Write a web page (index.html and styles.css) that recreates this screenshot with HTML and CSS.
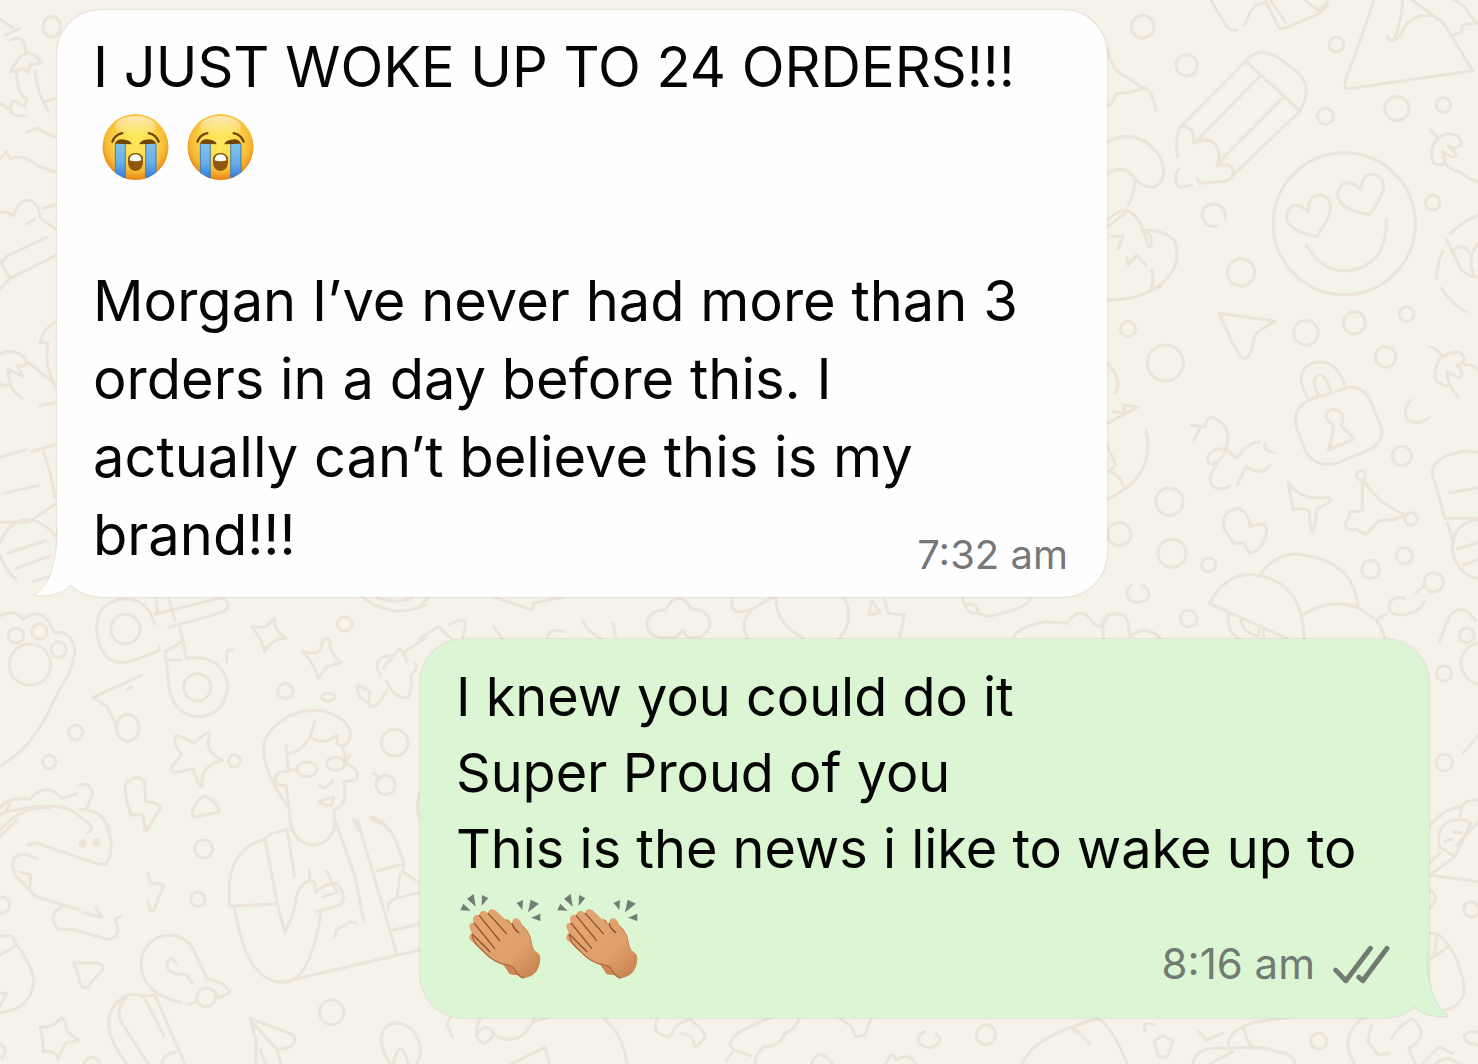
FILE: index.html
```html
<!DOCTYPE html>
<html lang="en">
<head>
<meta charset="utf-8">
<meta name="viewport" content="width=device-width, initial-scale=1">
<title>Chat with Morgan</title>
<link rel="stylesheet" href="styles.css">
</head>
<body>
<svg class="wallpaper" viewBox="0 0 1478 1064" preserveAspectRatio="xMinYMin slice" aria-hidden="true">
  <!-- pencil, smiley, slice and loose rings: top right -->
  <g transform="translate(1100 0) scale(.33333)">
    <circle cx="128" cy="80" r="34"/><circle cx="260" cy="196" r="32"/><circle cx="709" cy="134" r="22"/><circle cx="676" cy="349" r="24"/><circle cx="891" cy="326" r="36"/><circle cx="1030" cy="315" r="22"/><circle cx="423" cy="817" r="41"/><circle cx="998" cy="608" r="22"/><circle cx="733" cy="671" r="213"/>
    <path d="M333 0Q360 50 380 78Q392 94 412 90M434 76Q450 28 470 15L498 5L536 82Q546 90 560 83L655 42Q680 28 682 0M512 0L556 66M615 0Q650 30 660 32Q668 20 682 10"/>
    <path d="M822 0Q775 140 740 230Q728 268 745 266L1118 212Q1080 150 1055 108Q1020 50 1012 58Q990 35 935 0M908 0Q905 70 880 122Q868 128 862 108M880 122Q900 115 915 80Q935 45 992 46M1060 0Q1095 12 1110 45L1130 70L1088 75L1085 95L1055 108"/>
    <path d="M437 183Q480 135 540 176L595 220Q640 260 600 333ZM437 183L243 378M478 230L283 430M549 294L358 486M600 333L400 525M243 378Q225 405 232 470M243 378Q290 380 280 430Q330 405 350 440Q365 470 350 498Q395 480 401 520Q390 545 370 544L300 550L292 536M238 505Q215 535 238 563L275 555"/>
    <path d="M650 710Q555 690 560 645Q575 590 624 635Q625 580 665 586Q725 605 650 710ZM808 643Q715 630 712 580Q730 525 782 567Q788 515 825 524Q885 545 808 643ZM620 737Q665 815 740 813Q860 800 860 657"/>
    <path d="M375 657Q383 620 343 611Q305 615 306 648Q315 685 350 679M23 145Q35 215 70 225L130 265Q155 260 168 333M23 318Q40 310 50 280Q90 280 130 265M23 425Q120 380 180 470Q210 540 160 562Q125 560 105 535Q75 490 23 520M105 535Q105 580 85 615M23 660Q90 590 130 690Q145 750 150 740Q165 700 125 690Q200 690 225 725Q250 800 180 855Q120 900 23 900M23 680L75 640M35 710L70 708L55 745M80 770L85 795L110 765L138 795M155 810Q165 850 150 870L180 860"/>
    <path d="M992 390L1015 415M1000 490Q985 440 1015 415Q1040 390 1075 410Q1095 435 1065 445L1045 438L1070 465Q1060 480 1028 455L1035 490Q1020 498 1000 490M1035 490Q1060 515 1080 517Q1110 540 1134 545M1050 700L1095 665L1134 645M1040 720L1085 810Q1110 835 1134 830M1060 750Q1090 725 1110 760M1134 730Q1100 770 1120 820M1028 755Q1010 790 1010 835M1025 865Q1060 920 1100 935"/>
  </g>
  <!-- padlock, paper dart and sparks: right edge -->
  <g transform="translate(1100 290) scale(.33333)">
    <circle cx="84" cy="117" r="23"/><circle cx="196" cy="219" r="54"/><circle cx="618" cy="128" r="37"/><circle cx="763" cy="98" r="33"/><circle cx="920" cy="72" r="22"/><circle cx="857" cy="201" r="31"/><circle cx="906" cy="498" r="29"/><circle cx="208" cy="635" r="41"/><circle cx="58" cy="732" r="35"/><circle cx="216" cy="790" r="42"/><circle cx="326" cy="825" r="21"/><circle cx="913" cy="797" r="24"/><circle cx="812" cy="838" r="27"/><circle cx="1001" cy="877" r="29"/><circle cx="933" cy="687" r="19"/><circle cx="783" cy="556" r="14"/>
    <path d="M357 70L524 93L470 128Q460 145 455 180Q440 215 425 203L400 165Z"/>
    <path d="M625 328Q580 250 630 222Q710 195 735 290M655 315Q630 270 655 255Q675 250 692 303M640 325L745 292Q790 290 810 330L840 400Q860 450 810 478L710 520Q645 535 615 480L590 415Q575 355 625 332ZM700 405Q670 385 680 370Q700 345 724 370Q735 390 722 405L762 447L685 480Q700 440 700 405"/>
    <path d="M273 405L315 410Q320 380 340 382Q400 410 378 475Q360 525 330 522Q310 500 345 480L378 475L408 505L425 485Q450 455 478 455M280 455L300 415M350 520Q310 580 350 595Q375 600 390 588M412 585L438 530Q490 560 508 525M495 460Q490 485 524 488"/>
    <path d="M565 577Q595 620 640 623L685 623Q710 630 650 657Q650 690 640 725Q630 730 628 665Q615 650 580 660Q570 620 565 577ZM787 572V662L750 666Q745 690 735 700Q735 725 770 718L798 733L838 692L885 688L912 676L845 635Q800 590 790 570M450 710Q450 670 415 655Q360 665 372 715L400 760L430 758L448 790Q480 785 495 745Q510 700 480 702Z"/>
    <path d="M988 172Q1010 170 1025 198M1045 288Q985 280 1015 215Q1040 180 1080 188Q1110 215 1070 225Q1100 255 1075 263L1042 245Q1040 290 1075 320M1095 225Q1120 220 1134 240M932 330Q900 375 930 393Q960 405 988 382M1134 487L1095 483Q990 500 998 555L1035 685H1134M1050 608L1134 594M1042 700L1058 750M1134 690Q1050 700 1058 790Q1080 860 1134 865M1072 777L1134 757M1090 825L1134 808M23 220Q70 270 45 310M23 400L115 350L70 345L75 370L40 365M138 418Q170 560 23 627M23 470L48 525L25 545Q60 550 70 590"/>
  </g>
  <!-- cap and small loops above the reply -->
  <g transform="translate(1100 540) scale(.33333)">
    <circle cx="266" cy="236" r="25"/><circle cx="1100" cy="286" r="22"/>
    <path d="M328 190Q375 100 460 104Q610 120 612 295M328 190L560 295M480 102Q530 40 590 42Q760 60 773 195M612 222Q730 155 820 235M385 225Q380 270 412 295M422 240Q430 280 475 288L478 268M490 270V295M855 295Q845 260 828 240L860 222M948 158L975 137M912 175Q890 165 870 185Q855 230 915 224Q960 215 973 185M1018 305L1050 225Q1080 195 1110 222L1125 240M95 135Q70 155 90 180Q110 195 140 180Q160 155 125 135M10 295L8 245Q35 205 75 230Q90 250 88 290Q140 250 180 295"/>
  </g>
  <!-- gap between the two messages -->
  <g transform="translate(420 590) scale(.44643 .33333)">
    <path d="M168 22L250 60L255 40L320 22M550 60Q560 30 580 25Q600 30 605 55L630 62Q670 100 630 140L600 143L588 120L575 140Q510 155 508 100Q515 60 550 60M700 22Q690 80 740 60L790 22M740 65Q715 100 735 145M798 22Q795 100 860 145M950 22Q975 90 940 145M1010 35L1005 75L1030 68L1015 35M1040 30L1050 70L1085 75L1075 140M1215 22Q1225 80 1250 70Q1250 35 1220 45M1250 70L1270 80Q1360 60 1368 22M1330 140Q1340 110 1400 95L1450 100Q1480 40 1505 95Q1530 130 1540 75L1568 70M285 145Q290 110 322 125M365 92Q370 120 405 145M432 98L438 140M0 145L40 110L70 145M65 105Q110 70 100 120L95 145M0 50L18 22M165 110L185 145"/>
  </g>
  <!-- paw, headphones, stars and portrait: left -->
  <g transform="translate(0 590) scale(.33333)">
    <circle cx="48" cy="137" r="23"/><circle cx="119" cy="125" r="23"/><circle cx="176" cy="179" r="23"/><circle cx="90" cy="224" r="62"/><circle cx="376" cy="117" r="44"/><circle cx="592" cy="292" r="41"/><circle cx="1034" cy="102" r="22"/><circle cx="856" cy="303" r="23"/><circle cx="703" cy="513" r="18"/><circle cx="227" cy="427" r="22"/><circle cx="148" cy="516" r="20"/><circle cx="1184" cy="458" r="40"/><circle cx="1157" cy="585" r="29"/><ellipse cx="383" cy="413" rx="34" ry="40"/><ellipse cx="921" cy="538" rx="30" ry="22"/><ellipse cx="1007" cy="521" rx="28" ry="20"/><ellipse cx="985" cy="321" rx="20" ry="12"/>
    <path d="M0 78Q40 55 70 88Q130 40 162 128Q215 120 225 180Q220 230 190 280M183 290L155 345Q100 470 5 524"/>
    <path d="M465 102Q440 25 375 26Q285 35 290 125Q305 240 400 212L478 182V168M465 72L670 22Q700 50 665 68L505 112M468 22L472 65M505 22L525 90M538 105L560 205Q670 190 684 290Q670 380 590 380Q510 370 505 270L495 185L545 155M500 210H545M426 255L280 322L320 350L350 405M380 300L395 290M680 215V182L697 180"/>
    <path d="M755 110L795 112L825 85Q820 120 857 145Q815 145 793 187Q790 150 755 110ZM908 185Q950 195 960 180Q975 125 990 155Q985 185 1024 218L980 230L955 265Q945 225 908 185ZM525 440Q530 430 582 460Q635 410 628 440Q615 490 668 510Q600 530 607 585Q600 600 578 535Q500 560 515 530L545 495Q520 460 525 440ZM392 675Q365 590 382 575Q415 550 434 575L437 635Q500 640 475 665L440 720M392 675H430L434 720M578 682Q570 650 612 616Q650 635 660 665Z"/>
    <path d="M862 648Q760 500 805 430Q870 350 970 363Q1060 390 1050 445Q1040 475 1010 462L1012 435Q970 470 930 440L945 393M930 440Q900 490 865 490M858 465L865 545Q815 540 830 580Q840 590 858 585L875 720M865 540L890 540M1025 465L1040 520Q1085 540 1068 570L1030 575Q1050 640 1002 660L1005 720M1035 520L1050 495M958 585Q975 605 998 572M955 635L1002 620L995 645Q975 650 955 635"/>
    <path d="M0 655Q20 620 90 628Q135 570 185 625L228 612M232 588Q270 570 278 610L260 655M0 672Q180 620 240 680Q280 710 275 720M20 660Q30 640 28 640M240 657Q310 660 328 720M0 720Q60 650 150 653M1140 255Q1120 215 1150 200L1185 195L1195 178Q1215 180 1220 215M1185 195L1150 232M1215 185L1275 145M1160 275Q1185 330 1225 322Q1240 290 1232 255Q1260 230 1245 220M1160 300Q1125 370 1105 340L1110 305L1075 285Q1065 320 1105 340M1120 550L1140 565M1088 22Q1180 90 1275 45M1130 22Q1190 45 1240 22M1060 688L1075 720M1112 682Q1150 690 1165 720M1258 610Q1245 660 1258 680"/>
  </g>
  <g transform="translate(0 820) scale(.33333)">
    <circle cx="611" cy="87" r="27"/><circle cx="593" cy="238" r="22"/><circle cx="995" cy="577" r="37"/><circle cx="618" cy="532" r="28"/><circle cx="4" cy="255" r="25"/><circle class="dot" cx="248" cy="70" r="8"/><circle class="dot" cx="290" cy="68" r="8"/>
    <path d="M0 50L50 0M255 0Q290 25 262 38M312 0Q350 80 320 130Q305 135 290 130L105 68L85 75M108 115Q70 95 45 110Q30 140 50 170L105 228L238 270M55 155L92 165L90 200M250 278L305 292L288 265M185 260Q140 285 172 325Q190 330 215 328L325 358Q365 350 350 310L345 297L362 290"/>
    <path d="M430 0L440 33L460 0M445 158L450 188Q480 190 491 195L462 270Q450 285 445 245M220 428L290 428Q325 440 298 460L275 485Q260 520 240 490Q235 455 220 428ZM120 620Q160 625 180 595Q195 590 200 630L235 662L195 670L175 715Q165 690 130 695Q130 660 120 620Z"/>
    <path d="M545 548Q410 520 425 410Q450 345 510 345Q570 350 590 410L620 475L665 490Q700 520 685 520L655 535L640 510M565 553L595 545M528 430Q515 405 502 425Q495 465 555 462L578 488M380 732Q280 600 365 535Q395 515 430 528L465 525L555 732M430 528L492 648M445 732L360 600Q350 560 380 530M485 732Q490 700 528 697"/>
    <path d="M870 0Q880 70 940 76Q1000 70 1005 0M815 40L795 57Q670 90 690 258L832 252L795 57M830 37L862 28L883 168M832 252L855 338Q890 260 887 240Q895 190 930 182L928 150M703 262Q740 490 850 486Q930 490 962 280M850 486L1258 390M930 182Q950 180 948 218Q970 190 1010 190Q1045 230 1020 255L950 275M980 153L1010 218L970 230M1005 0L1065 170L1092 305M1072 0L1190 400M1115 0Q1170 10 1190 70L1212 130L1130 153M1212 130L1208 155L1258 187M1200 165L1190 235L1258 217M1190 235Q1155 250 1165 270M1180 330L1258 312M1005 350L1010 330L1050 305L1068 308"/>
    <path d="M0 578Q90 570 102 485Q95 430 50 375L35 347H0M0 405L50 375M0 520L20 520L0 558M768 732V660L750 595L880 645Q900 685 830 688L843 732M755 605L830 688M780 690L798 732M1170 732Q1120 650 1165 615Q1210 595 1245 640Q1275 690 1250 732M1180 732Q1200 640 1225 732M250 732Q275 690 303 732M0 670Q30 690 5 715"/>
  </g>
  <!-- flower, vine and slats: far left -->
  <g transform="scale(.33333 .38265)">
    <circle cx="155" cy="70" r="27"/>
    <path d="M0 50L38 72M15 92L58 75M30 105Q75 85 78 138M78 138Q50 150 32 188L70 180L85 188L92 168L125 165Q110 140 78 138M50 190Q50 240 80 260L75 278L40 262Q20 290 45 302L80 303M105 185Q110 240 145 292M135 265L165 257M0 270L35 290M82 345L115 335L130 345L165 358M0 415L20 395L30 415Q70 400 110 432L165 450M0 555Q20 550 40 565Q55 515 95 525Q120 540 120 570L165 598M80 585L105 573M0 692L20 670L140 620M0 755L30 728L165 668M0 680L30 728M130 545L165 535M165 842Q130 860 120 895L145 898Q130 950 165 1010M0 925Q50 905 82 945L160 1000M82 945Q80 960 50 955L70 985L25 965Q25 1020 65 1040M0 1000Q10 1015 25 1005M120 1060L165 1052M0 1195L78 1175M95 1180L165 1162M130 1180Q155 1240 165 1300M15 1288L115 1268M0 1365H85L165 1318M0 1420Q30 1350 100 1360Q140 1370 165 1400M0 1450Q20 1500 48 1512M25 1445L138 1412M48 1486L152 1452M100 1520L165 1502"/>
  </g>
  <!-- strip below and beside the reply -->
  <g transform="translate(420 1005) scale(.67474 .33333)">
    <ellipse cx="839" cy="89" rx="14" ry="30"/><ellipse cx="1332" cy="108" rx="12" ry="24"/>
    <path d="M45 37L40 60L48 95M90 37Q75 100 95 115Q115 95 105 72Q90 60 85 90M110 88Q135 120 155 85L168 50L190 37M168 50V37M270 37Q300 80 307 177M135 177L185 127L192 177M352 37Q340 90 370 95L380 60L400 42Q430 90 420 105L408 125L402 95L388 85M520 37L478 75Q450 110 465 135L490 152M455 165L465 135M562 37Q560 70 540 85Q535 125 510 125Q495 150 497 177M620 37L640 65L645 95L660 90L668 40M580 177Q590 120 612 177M690 177Q700 130 705 165Q725 140 735 177M748 80Q735 90 740 115Q755 140 768 115Q775 100 765 88M892 177Q910 90 1005 42Q1025 60 1048 177M970 70L992 115M1005 42Q960 60 970 80M1075 80Q1070 45 1088 60M1100 92L1116 108L1108 155L1095 155L1088 110ZM1145 177Q1150 120 1200 130Q1190 80 1240 50L1290 37M1200 130Q1250 120 1270 140Q1295 145 1297 177M1170 177L1205 140M1220 65Q1225 110 1235 130M1155 80L1165 105L1190 85M1400 37Q1360 90 1385 177M1410 60L1405 110L1420 150L1435 145M1440 100L1450 70L1470 40Q1500 90 1465 130L1475 177M1485 177L1510 125L1530 145M1568 80Q1535 80 1555 115L1568 120M1505 177Q1520 145 1540 177"/>
  </g>
  <g transform="translate(1400 600) scale(.33333)">
    <circle cx="132" cy="220" r="23"/><circle cx="133" cy="488" r="25"/><circle cx="214" cy="928" r="23"/><circle cx="245" cy="190" r="62"/>
    <path d="M190 458L234 408M87 680Q130 625 185 620Q195 600 234 600M185 620L178 655M118 740Q105 670 165 660Q205 655 212 670L165 770L118 740M234 665L170 735M87 790L120 760M97 820L165 770M87 825L234 845M135 725L155 718M160 695L185 700M87 870Q125 890 87 925M87 1000Q130 990 170 1080Q205 1170 185 1195Q170 1225 135 1230M110 1010L102 1070L145 1040M87 1080L102 1070"/>
  </g>
</svg>

<svg class="sprites" aria-hidden="true">
  <defs>
    <radialGradient id="skin-yellow" cx=".5" cy=".42" r=".6"><stop offset="0" stop-color="#fdea5c"/><stop offset=".45" stop-color="#fcdc4e"/><stop offset=".75" stop-color="#f8b934"/><stop offset="1" stop-color="#e2790f"/></radialGradient>
    <linearGradient id="tears" x1="0" y1="0" x2="0" y2="1"><stop offset="0" stop-color="#86c0ea"/><stop offset=".5" stop-color="#66adea"/><stop offset="1" stop-color="#1e67d6"/></linearGradient>
    <linearGradient id="shine" x1="0" y1="0" x2="0" y2="1"><stop offset="0" stop-color="#fff" stop-opacity=".6"/><stop offset="1" stop-color="#fff" stop-opacity="0"/></linearGradient>
    <linearGradient id="skin-tan" x1="0" y1="0" x2="1" y2="1"><stop offset="0" stop-color="#e3a673"/><stop offset=".65" stop-color="#dea06b"/><stop offset="1" stop-color="#c47c49"/></linearGradient>
    <clipPath id="face-edge"><circle cx="407" cy="170" r="100"/></clipPath>
    <symbol id="crying" viewBox="306 67 202 206">
      <circle cx="407" cy="170" r="100" fill="url(#skin-yellow)"/>
      <ellipse cx="407" cy="108" rx="62" ry="32" fill="url(#shine)"/>
      <g clip-path="url(#face-edge)">
        <path d="M345 160H376V280H345ZM438 160H470V280H438Z" fill="url(#tears)"/>
        <path d="M346 160V280M376 160V280M438 160V280M469 160V280" stroke="#4d7f9c" stroke-width="3"/>
      </g>
      <path d="M344 160Q352 145 370 147Q392 148 396 162ZM418 162Q422 148 444 147Q462 145 470 160Z" fill="#714509"/>
      <path d="M337 154Q344 133 367 128M447 128Q470 133 477 154" fill="none" stroke="#714509" stroke-width="7" stroke-linecap="round"/>
      <path d="M384 212Q386 190 407 190Q428 190 430 212Q430 243 407 243Q384 243 384 212Z" fill="#91570f"/>
      <path d="M389 210Q391 192 407 192Q423 192 425 210Q407 216 389 210Z" fill="#fff"/>
      <path d="M386 206Q387 190 407 190Q427 190 428 206" fill="none" stroke="#714509" stroke-width="3"/>
    </symbol>
    <symbol id="clap" viewBox="60 66 243 258">
      <path d="M61 118L70 98L92 119ZM81 83L101 69L107 107ZM126 72L145 81L125 105ZM230 96L249 87L247 117ZM272 86L297 98L264 124ZM273 140L301 128V150Z" fill="#747d75"/>
      <path d="M190 282Q202 297 208 309Q220 313 238 312L235 285ZM185 150Q205 135 214 160L240 200L205 190Z" fill="#cb8752"/>
      <path d="M216 160Q216 140 230 142Q240 144 247 162Q270 183 274 210Q277 232 282 239L300 254Q304 280 288 303Q270 321 249 322Q232 317 222 297Q215 283 200 284Q170 278 135 247Q105 220 90 206Q84 191 96 188Q83 165 92 157L101 155Q94 136 109 131L118 132Q118 118 135 120L145 127Q145 114 158 115Q166 116 173 124L213 162Z" fill="url(#skin-tan)"/>
      <path d="M145 127L199 188M118 134L179 209M103 157L164 232M97 190L150 242M216 158Q222 175 236 185" fill="none" stroke="#8f5025" stroke-width="4" stroke-linecap="round"/>
      <path d="M96 190Q98 213 130 241Q160 274 200 282Q218 282 226 299Q235 316 250 321" fill="none" stroke="#b0683a" stroke-width="4" stroke-linecap="round"/>
      <path d="M248 165Q271 187 273 212Q276 231 283 239L299 252" fill="none" stroke="#c98450" stroke-width="3"/>
    </symbol>
    <symbol id="tail" viewBox="0 0 48 68">
      <path class="tail-fill" d="M22 0C22 36 14 56 2 64Q-1 67 4 67C18 67 30 63 36 56L48 40V0Z"/>
      <path class="tail-edge" d="M22 0C22 36 14 56 2 64Q-1 67 4 67C18 67 30 63 36 56"/>
    </symbol>
  </defs>
</svg>

<main class="chat">
  <article class="bubble incoming">
    <svg class="tail" aria-hidden="true"><use href="#tail"/></svg>
    <div class="text">
      <p>I JUST WOKE UP TO 24 ORDERS!!!</p>
      <div class="emoji-row" role="img" aria-label="Two loudly crying faces">
        <svg class="face"><use href="#crying"/></svg>
        <svg class="face"><use href="#crying"/></svg>
      </div>
      <p class="spaced">Morgan I’ve never had more than 3<br>orders in a day before this. I<br>actually can’t believe this is my<br>brand!!!</p>
    </div>
    <footer class="meta"><time datetime="07:32">7:32 am</time></footer>
  </article>

  <article class="bubble outgoing">
    <svg class="tail" aria-hidden="true"><use href="#tail"/></svg>
    <div class="text">
      <p>I knew you could do it<br>Super Proud of you<br>This is the news i like to wake up to</p>
      <div class="emoji-row" role="img" aria-label="Two pairs of clapping hands">
        <svg class="hands"><use href="#clap"/></svg>
        <svg class="hands"><use href="#clap"/></svg>
      </div>
    </div>
    <footer class="meta">
      <time datetime="08:16">8:16 am</time>
      <svg class="ticks" viewBox="577 99 172 116" role="img" aria-label="Delivered"><path d="M585 174L616 206L690 108M655 195L667 206L740 108"/></svg>
    </footer>
  </article>
</main>
</body>
</html>
```

FILE: styles.css
```css
* {
  box-sizing: border-box;
}

body {
  margin: 0;
  min-height: 100vh;
  position: relative;
  overflow-x: hidden;
  background: #f5f2ea;
  color: #050505;
  font-family: Inter, "Liberation Sans", sans-serif;
}

p {
  margin: 0;
}

.wallpaper {
  position: absolute;
  inset: 0;
  width: 100%;
  height: 100%;
  fill: none;
  stroke: #ece3d9;
  stroke-width: 3px;
  stroke-linecap: round;
  stroke-linejoin: round;
}

.wallpaper path,
.wallpaper circle,
.wallpaper ellipse {
  vector-effect: non-scaling-stroke;
}

.wallpaper .dot {
  fill: #ece3d9;
}

.sprites {
  position: absolute;
  width: 0;
  height: 0;
}

.chat {
  position: relative;
  display: flex;
  flex-direction: column;
  gap: 42px;
  padding: 10px 49px 46px 57px;
}

.bubble {
  position: relative;
  display: grid;
  width: 100%;
  border-radius: 44px;
  box-shadow: 0 0 2px rgba(60, 50, 40, .25);
}

.incoming {
  --fill: #fefefe;
  align-self: flex-start;
  max-width: 1050px;
  padding: 18px 39px 18px 36px;
  background: var(--fill);
  font-size: 56px;
  line-height: 78px;
}

.outgoing {
  --fill: #dcf6d4;
  align-self: flex-end;
  max-width: 1009px;
  padding: 20px 39px 30px 36px;
  background: var(--fill);
  font-size: 54px;
  line-height: 76px;
}

.text,
.meta {
  grid-area: 1 / 1;
}

.incoming .text {
  padding-bottom: 5px;
}

.outgoing .text {
  padding-bottom: 3px;
}

.spaced {
  margin-top: 78px;
}

.emoji-row {
  display: flex;
  align-items: center;
}

.incoming .emoji-row {
  gap: 18px;
  height: 78px;
  padding: 4px 0 0 9px;
}

.outgoing .emoji-row {
  gap: 16px;
  height: 98px;
  padding-left: 4px;
}

.face {
  width: 67px;
  height: 68px;
}

.hands {
  width: 81px;
  height: 86px;
}

.meta {
  align-self: end;
  justify-self: end;
  display: flex;
  align-items: center;
  gap: 18px;
  color: #77777a;
  font-size: 40px;
  line-height: 48px;
}

.outgoing .meta {
  color: #727b72;
  font-size: 42px;
}

.ticks {
  width: 57px;
  height: 39px;
  fill: none;
  stroke: currentColor;
  stroke-width: 15;
  stroke-linecap: round;
  stroke-linejoin: round;
}

.tail {
  position: absolute;
  bottom: 0;
  left: -22px;
  width: 48px;
  height: 68px;
}

.outgoing .tail {
  left: auto;
  right: -20px;
  transform: scaleX(-1);
}

.tail-fill {
  fill: var(--fill);
}

.tail-edge {
  fill: none;
  stroke: rgba(60, 50, 40, .1);
}
```
